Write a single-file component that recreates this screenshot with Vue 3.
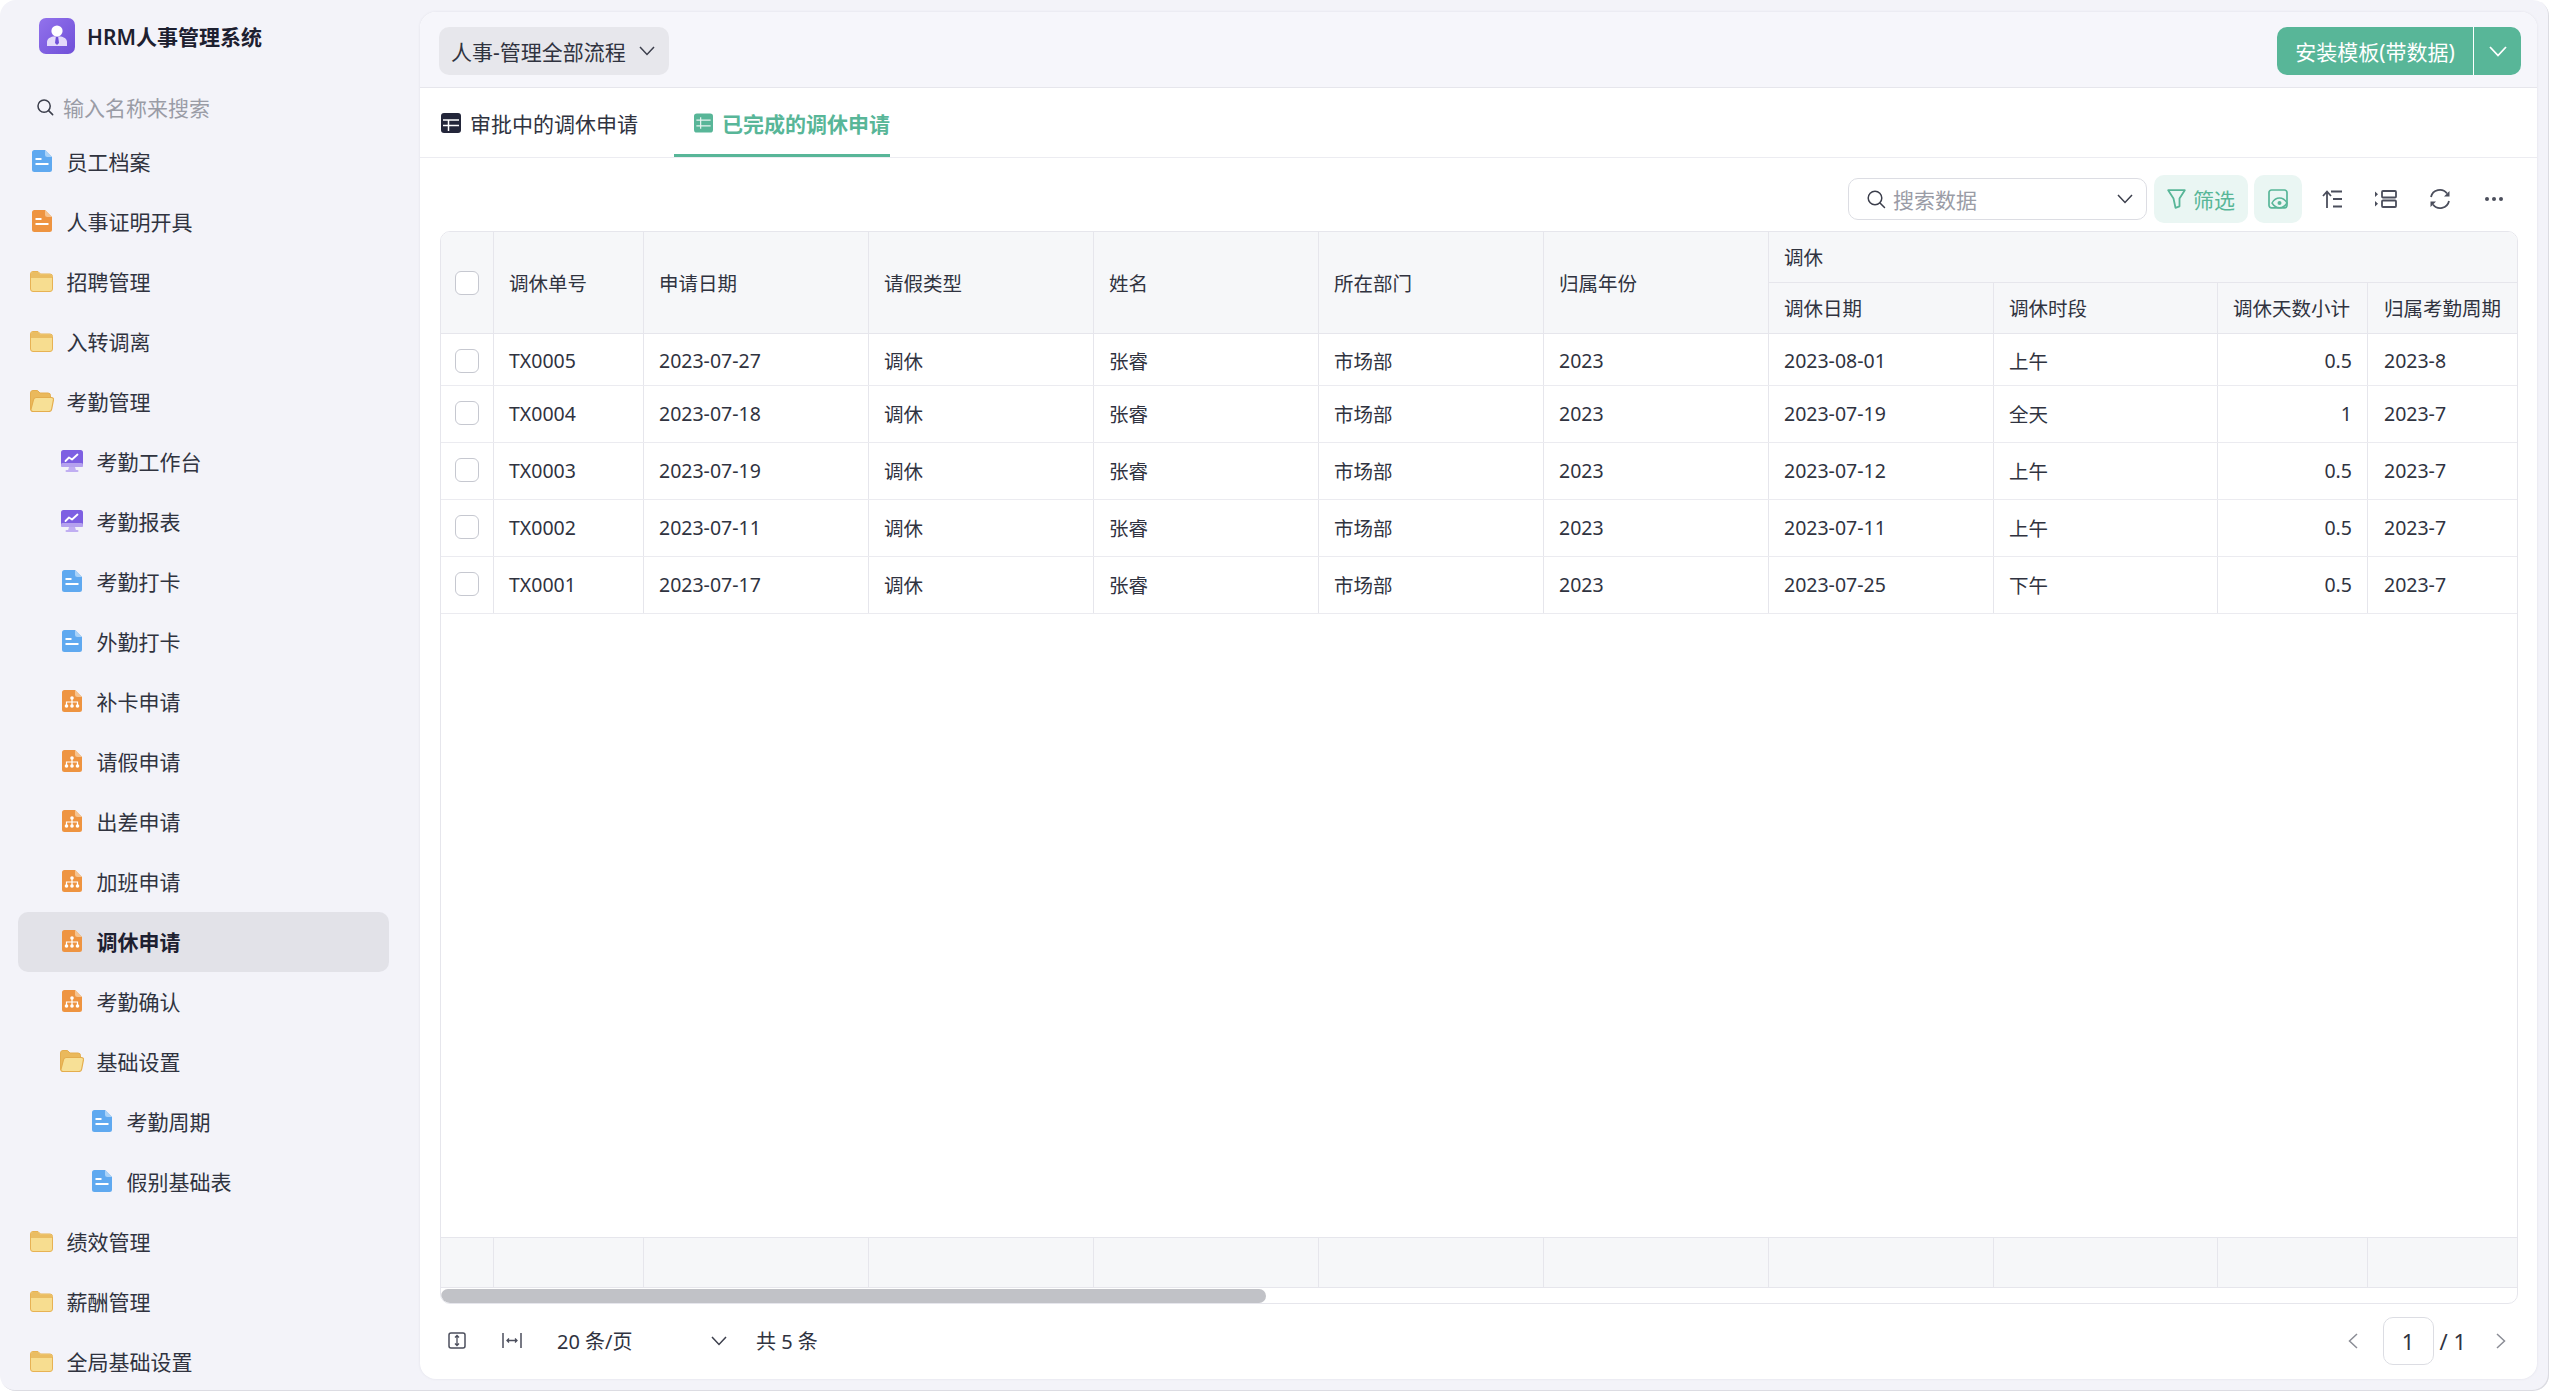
<script setup>
const menu = [
  { name: '员工档案', icon: 'doc-blue', level: 0 },
  { name: '人事证明开具', icon: 'doc-orange', level: 0 },
  { name: '招聘管理', icon: 'folder', level: 0 },
  { name: '入转调离', icon: 'folder', level: 0 },
  { name: '考勤管理', icon: 'open', level: 0 },
  { name: '考勤工作台', icon: 'chart', level: 1 },
  { name: '考勤报表', icon: 'chart', level: 1 },
  { name: '考勤打卡', icon: 'doc-blue', level: 1 },
  { name: '外勤打卡', icon: 'doc-blue', level: 1 },
  { name: '补卡申请', icon: 'flow', level: 1 },
  { name: '请假申请', icon: 'flow', level: 1 },
  { name: '出差申请', icon: 'flow', level: 1 },
  { name: '加班申请', icon: 'flow', level: 1 },
  { name: '调休申请', icon: 'flow', level: 1, active: true },
  { name: '考勤确认', icon: 'flow', level: 1 },
  { name: '基础设置', icon: 'open', level: 1 },
  { name: '考勤周期', icon: 'doc-blue', level: 2 },
  { name: '假别基础表', icon: 'doc-blue', level: 2 },
  { name: '绩效管理', icon: 'folder', level: 0 },
  { name: '薪酬管理', icon: 'folder', level: 0 },
  { name: '全局基础设置', icon: 'folder', level: 0 },
]

const rows = [
  ['TX0005', '2023-07-27', '调休', '张睿', '市场部', '2023', '2023-08-01', '上午', '0.5', '2023-8'],
  ['TX0004', '2023-07-18', '调休', '张睿', '市场部', '2023', '2023-07-19', '全天', '1', '2023-7'],
  ['TX0003', '2023-07-19', '调休', '张睿', '市场部', '2023', '2023-07-12', '上午', '0.5', '2023-7'],
  ['TX0002', '2023-07-11', '调休', '张睿', '市场部', '2023', '2023-07-11', '上午', '0.5', '2023-7'],
  ['TX0001', '2023-07-17', '调休', '张睿', '市场部', '2023', '2023-07-25', '下午', '0.5', '2023-7'],
]

const mainHeads = ['调休单号', '申请日期', '请假类型', '姓名', '所在部门', '归属年份']
const subHeads = ['调休日期', '调休时段', '调休天数小计', '归属考勤周期']
</script>

<template>
  <div class="window">
    <aside class="sidebar">
      <div class="brand">
        <svg class="logo" viewBox="0 0 36 36">
          <defs>
            <linearGradient id="logoBg" x1="0" y1="0" x2="1" y2="1">
              <stop offset="0" stop-color="#9272ec" />
              <stop offset="1" stop-color="#6f4fd8" />
            </linearGradient>
          </defs>
          <rect width="36" height="36" rx="7" fill="url(#logoBg)" />
          <circle cx="18" cy="13" r="5.6" fill="#fff" />
          <path d="M8 28v-4c0-3 3-5 6-5.5h8c3 .5 6 2.5 6 5.5v4z" fill="#e3dafa" />
          <path d="M16.8 19h2.4l.8 6-2 2-2-2z" fill="#6f4fd8" />
        </svg>
        <span class="brand-name">HRM人事管理系统</span>
      </div>
      <div class="side-search">
        <svg viewBox="0 0 20 20" class="side-search-icon">
          <circle cx="9" cy="9" r="6.8" fill="none" stroke="#3c3f4c" stroke-width="1.7" />
          <path d="M14 14l4.5 4.5" stroke="#3c3f4c" stroke-width="1.7" stroke-linecap="round" />
        </svg>
        <span>输入名称来搜索</span>
      </div>
      <nav class="menu">
        <div
          v-for="item in menu"
          :key="item.name"
          class="menu-item"
          :class="[`level-${item.level}`, { active: item.active }]"
        >
          <span class="menu-icon">
            <svg v-if="item.icon === 'doc-blue' || item.icon === 'doc-orange'" width="20" height="22" viewBox="0 0 20 22">
              <path
                d="M2.5 0H13l7 7v12.500a2.500 2.500 0 0 1-2.500 2.500h-15A2.500 2.500 0 0 1 0 19.500v-17A2.500 2.500 0 0 1 2.500 0z"
                :fill="item.icon === 'doc-blue' ? '#5fa9f0' : '#ee9441'"
              />
              <path d="M13 0l7 7h-4.500A2.500 2.500 0 0 1 13 4.500z" :fill="item.icon === 'doc-blue' ? '#a9d2f8' : '#f6c38f'" />
              <path d="M3.500 9h6M3.500 14h13" stroke="#fff" stroke-width="1.800" />
            </svg>
            <svg v-else-if="item.icon === 'flow'" width="20" height="22" viewBox="0 0 20 22">
              <path
                d="M2.500 0H13l7 7v12.500a2.500 2.500 0 0 1-2.500 2.500h-15A2.500 2.500 0 0 1 0 19.500v-17A2.500 2.500 0 0 1 2.500 0z"
                fill="#ee9441"
              />
              <path d="M13 0l7 7h-4.500A2.500 2.500 0 0 1 13 4.500z" fill="#f6c38f" />
              <g fill="#fff">
                <circle cx="10" cy="8" r="1.800" />
                <circle cx="4.500" cy="16" r="1.800" />
                <circle cx="10" cy="16" r="1.800" />
                <circle cx="15.500" cy="16" r="1.800" />
              </g>
              <path d="M10 8v7M4.500 15v-3h11v3" fill="none" stroke="#fff" stroke-width="1.200" />
            </svg>
            <svg v-else-if="item.icon === 'chart'" class="chart-icon" width="22" height="22" viewBox="0 0 22 22">
              <path d="M8 17h6l1 3.500H7z" fill="#c0aef2" />
              <rect x="4.500" y="20" width="13" height="2" rx="1" fill="#c0aef2" />
              <rect width="22" height="17" rx="2.500" fill="#7d5fe2" />
              <rect y="13" width="22" height="4" rx="1.500" fill="#b5a1ef" />
              <path d="M4.500 11l3.500-3.500 3 2 5.500-5" fill="none" stroke="#fff" stroke-width="1.800" stroke-linecap="round" stroke-linejoin="round" />
            </svg>
            <svg v-else-if="item.icon === 'open'" class="folder-icon" width="24" height="22" viewBox="0 0 24 22">
              <path d="M.5 19V3A2.500 2.500 0 0 1 3 .500h4.500L10 3h8a2.500 2.500 0 0 1 2.500 2.500V8H6L3 20.500H2A1.500 1.500 0 0 1 .5 19z" fill="#eab95c" stroke="#e4ad4e" />
              <path d="M6.200 7.500H21.500c1.300 0 2.200 1 2 2.200l-1.800 9.300c-.2 1.400-1.300 2.500-2.700 2.500H3c-1.300 0-2.300-1-2-2.300L3.500 9.700c.3-1.300 1.400-2.200 2.700-2.200z" fill="#f7e096" stroke="#e4ad4e" stroke-width="1.200" />
            </svg>
            <svg v-else class="folder-icon" width="23" height="21" viewBox="0 0 23 21">
              <path d="M.5 18V3A2.500 2.500 0 0 1 3 .500h5L10.500 3H20a2.500 2.500 0 0 1 2.500 2.500V18a2.500 2.500 0 0 1-2.500 2.500H3A2.500 2.500 0 0 1 .5 18z" fill="#f7dd90" stroke="#e7b254" />
              <path d="M1 3a2 2 0 0 1 2-2h5l2.500 2.500H20A2 2 0 0 1 22 6v1H1z" fill="#eabd63" />
            </svg>
          </span>
          <span class="menu-name">{{ item.name }}</span>
        </div>
      </nav>
    </aside>

    <main class="panel">
      <header class="panel-head">
        <div class="flow-select">
          <span>人事-管理全部流程</span>
          <svg class="chevron" width="16" height="10" viewBox="0 0 16 10">
            <path d="M1 1l7 7.500L15 1" fill="none" stroke="#3c3f4c" stroke-width="1.500" />
          </svg>
        </div>
        <div class="install">
          <span class="install-main">安装模板(带数据)</span>
          <span class="install-arrow">
            <svg width="18" height="11" viewBox="0 0 18 11">
              <path d="M1 1l8 8.500L17 1" fill="none" stroke="#fff" stroke-width="1.800" />
            </svg>
          </span>
        </div>
      </header>

      <div class="tabs">
        <div class="tab">
          <svg width="20" height="20" viewBox="0 0 20 20">
            <rect width="20" height="20" rx="3" fill="#23263a" />
            <path d="M2 7h16M2 12.500h16M7.500 7v11" stroke="#fff" stroke-width="1.500" />
          </svg>
          <span>审批中的调休申请</span>
        </div>
        <div class="tab current">
          <svg width="20" height="20" viewBox="0 0 20 20">
            <rect width="20" height="20" rx="3" fill="#58b698" />
            <path d="M2.500 7h15M2.500 13h15M7 4v12" stroke="#fff" stroke-width="1.300" opacity=".85" />
          </svg>
          <span>已完成的调休申请</span>
        </div>
      </div>

      <div class="toolbar">
        <div class="data-search">
          <svg width="20" height="20" viewBox="0 0 20 20">
            <circle cx="9" cy="9" r="6.800" fill="none" stroke="#3c3f4c" stroke-width="1.500" />
            <path d="M14 14l4.500 4.500" stroke="#3c3f4c" stroke-width="1.500" stroke-linecap="round" />
          </svg>
          <span class="data-search-text">搜索数据</span>
          <svg width="16" height="10" viewBox="0 0 16 10">
            <path d="M1 1l7 7.500L15 1" fill="none" stroke="#3c3f4c" stroke-width="1.500" />
          </svg>
        </div>
        <div class="soft-btn filter">
          <svg width="19" height="20" viewBox="0 0 19 20">
            <path d="M1.200 1.200h16.600L12.500 9.500v7.800L8.500 18.800 6.500 9.500z" fill="none" stroke="#58b698" stroke-width="1.800" stroke-linejoin="round" />
          </svg>
          <span>筛选</span>
        </div>
        <div class="soft-btn eye">
          <svg width="20" height="20" viewBox="0 0 20 20">
            <path d="M5 18.800H3.500a2.500 2.500 0 0 1-2.500-2.500V3.500A2.500 2.500 0 0 1 3.500 1h13A2.500 2.500 0 0 1 19 3.500v12.800a2.500 2.500 0 0 1-2.500 2.500H5" fill="none" stroke="#58b698" stroke-width="1.700" />
            <path d="M4 14c2-3.500 4.500-5 7.500-5s5.500 1.500 7.500 5c-2 3.200-4.500 4.800-7.500 4.800S6 17.200 4 14z" fill="#eaf6f3" stroke="#58b698" stroke-width="1.500" />
            <circle cx="11.500" cy="14" r="2" fill="#58b698" />
          </svg>
        </div>
        <div class="tool-icons">
          <svg width="20" height="18" viewBox="0 0 20 18">
            <path d="M5 18V2M1 6l4-4.500L9 6" fill="none" stroke="#4b4e5c" stroke-width="1.800" />
            <path d="M9 1.500h11M11 9h9M11 16.500h9" stroke="#4b4e5c" stroke-width="1.800" />
          </svg>
          <svg width="22" height="18" viewBox="0 0 22 18">
            <rect x="7" y="1" width="14" height="6.500" rx="1" fill="none" stroke="#4b4e5c" stroke-width="1.800" />
            <rect x="7" y="10.500" width="14" height="6.500" rx="1" fill="none" stroke="#4b4e5c" stroke-width="1.800" />
            <path d="M0 1.500l3 2.700-3 2.700zM0 11l3 2.700L0 16.400z" fill="#4b4e5c" />
          </svg>
          <svg width="22" height="22" viewBox="0 0 22 22">
            <path d="M2 9a9 9 0 0 1 16-3.500M20 13a9 9 0 0 1-16 3.500" fill="none" stroke="#4b4e5c" stroke-width="1.800" />
            <path d="M20.500 3v5.500H15zM1.500 19v-5.500H7z" fill="#4b4e5c" />
          </svg>
          <svg width="20" height="6" viewBox="0 0 20 6">
            <circle cx="3" cy="3" r="2" fill="#4b4e5c" />
            <circle cx="10" cy="3" r="2" fill="#4b4e5c" />
            <circle cx="17" cy="3" r="2" fill="#4b4e5c" />
          </svg>
        </div>
      </div>

      <section class="grid-table">
        <div class="table-head">
          <div class="th span-rows check-cell"><span class="checkbox"></span></div>
          <div v-for="h in mainHeads" :key="h" class="th span-rows">{{ h }}</div>
          <div class="th group">调休</div>
          <div v-for="(h, i) in subHeads" :key="h" class="th sub" :class="{ last: i === 3 }">{{ h }}</div>
        </div>

        <div class="table-body">
          <div v-for="(row, r) in rows" :key="row[0]" class="tr" :class="{ first: r === 0 }">
            <div class="td check-cell"><span class="checkbox"></span></div>
            <div v-for="(val, c) in row" :key="c" class="td" :class="{ num: c === 8, last: c === 9 }">{{ val }}</div>
          </div>
        </div>

        <div class="table-foot">
          <div v-for="n in 11" :key="n" class="tf" :class="{ last: n === 11 }"></div>
        </div>
        <div class="scroll-track"><div class="scroll-thumb"></div></div>
      </section>

      <footer class="pager">
        <div class="pager-left">
          <svg width="18" height="17" viewBox="0 0 18 17">
            <rect x="1" y="1" width="16" height="15" rx="2" fill="none" stroke="#4b4e5c" stroke-width="1.500" />
            <path d="M9 3.500v10M7 5.500l2-2 2 2M7 11.500l2 2 2-2" fill="none" stroke="#4b4e5c" stroke-width="1.300" />
          </svg>
          <svg width="20" height="17" viewBox="0 0 20 17">
            <path d="M1 1v15M19 1v15" stroke="#4b4e5c" stroke-width="1.500" />
            <path d="M5 8.500h10M7 6.500l-2 2 2 2M13 6.500l2 2-2 2" fill="none" stroke="#4b4e5c" stroke-width="1.300" />
          </svg>
          <span class="page-size">20 条/页</span>
          <svg class="page-size-arrow" width="16" height="10" viewBox="0 0 16 10">
            <path d="M1 1l7 7.500L15 1" fill="none" stroke="#3c3f4c" stroke-width="1.500" />
          </svg>
          <span class="total">共 5 条</span>
        </div>
        <div class="pager-right">
          <svg width="10" height="16" viewBox="0 0 10 16">
            <path d="M9 1L1.500 8 9 15" fill="none" stroke="#8b8d96" stroke-width="1.500" />
          </svg>
          <span class="page-input">1</span>
          <span class="page-count">/ 1</span>
          <svg width="10" height="16" viewBox="0 0 10 16">
            <path d="M1 1l7.500 7L1 15" fill="none" stroke="#8b8d96" stroke-width="1.500" />
          </svg>
        </div>
      </footer>
    </main>
  </div>
</template>

<style>
html,
body {
  margin: 0;
  background: #fff;
}
</style>

<style scoped>
.window {
  box-sizing: border-box;
  width: 2549px;
  height: 1391px;
  display: flex;
  overflow: hidden;
  border-radius: 16px;
  background: #f3f3f9;
  box-shadow: inset -1px -1px 0 #dcdce2;
  font-family: "Noto Sans", "Noto Sans CJK SC", sans-serif;
  color: #23263a;
}

.sidebar {
  width: 420px;
  flex: none;
  box-sizing: border-box;
  padding: 18px 31px 0 18px;
}

.brand {
  display: flex;
  align-items: center;
  gap: 12px;
  height: 36px;
  padding-left: 21px;
}

.logo {
  width: 36px;
  height: 36px;
}

.brand-name {
  font-size: 21px;
  font-weight: 600;
  color: #1d2030;
}

.side-search {
  display: flex;
  align-items: center;
  gap: 9px;
  height: 48px;
  box-sizing: border-box;
  margin-top: 30px;
  padding: 0 0 3px 18px;
  font-size: 21px;
  color: #9a9ca6;
}

.side-search-icon {
  width: 18px;
  height: 18px;
}

.menu {
  display: flex;
  flex-direction: column;
}

.menu-item {
  display: flex;
  align-items: center;
  height: 60px;
  flex: none;
  box-sizing: border-box;
  padding-bottom: 2px;
  border-radius: 10px;
  font-size: 21px;
  color: #30333f;
}

.menu-item.level-0 {
  padding-left: 14px;
}

.menu-item.level-1 {
  padding-left: 44px;
}

.menu-item.level-2 {
  padding-left: 74px;
}

.menu-item.active {
  background: #e2e2e8;
  font-weight: 700;
  color: #1d2030;
}

.menu-icon {
  display: flex;
  align-items: center;
  width: 34.500px;
  flex: none;
}

.folder-icon {
  margin-left: -2px;
}

.chart-icon {
  margin-left: -1px;
}

.panel {
  flex: none;
  width: 2117px;
  height: 1367px;
  margin-top: 12px;
  display: flex;
  flex-direction: column;
  background: #fff;
  border-radius: 16px;
  box-shadow: 0 0 3px rgba(30, 30, 60, 0.08);
  overflow: hidden;
}

.panel-head {
  height: 76px;
  box-sizing: border-box;
  flex: none;
  display: flex;
  align-items: center;
  justify-content: space-between;
  padding: 3px 16px 0 19px;
  background: #f6f6fb;
  border-bottom: 1px solid #e6e6ec;
}

.flow-select {
  height: 48px;
  width: 230px;
  box-sizing: border-box;
  padding: 0 14px 0 12px;
  display: flex;
  align-items: center;
  justify-content: space-between;
  background: #e7e7ec;
  border-radius: 10px;
  font-size: 21px;
  color: #30333f;
}

.install {
  height: 48px;
  width: 244px;
  display: flex;
  background: #58b698;
  border-radius: 10px;
  color: #fff;
  font-size: 21px;
}

.install-main {
  width: 196px;
  display: flex;
  align-items: center;
  justify-content: center;
  border-right: 1px solid #fff;
}

.install-arrow {
  flex: 1;
  display: flex;
  align-items: center;
  justify-content: center;
}

.tabs {
  height: 70px;
  box-sizing: border-box;
  flex: none;
  display: flex;
  gap: 36px;
  padding-left: 21px;
  border-bottom: 1px solid #ececf1;
}

.tab {
  display: flex;
  align-items: center;
  gap: 9px;
  font-size: 21px;
  color: #30333f;
  white-space: nowrap;
  box-sizing: border-box;
}

.tab.current {
  width: 216px;
  flex: none;
  padding-left: 20px;
  color: #58b698;
  font-weight: 700;
  box-shadow: inset 0 -3px 0 #58b698;
}

.toolbar {
  height: 73px;
  box-sizing: border-box;
  flex: none;
  display: flex;
  align-items: center;
  justify-content: flex-end;
  padding: 9px 33px 0 0;
  gap: 6px;
}

.data-search {
  width: 299px;
  height: 42px;
  box-sizing: border-box;
  display: flex;
  align-items: center;
  padding: 0 13px 0 17px;
  margin-right: 1px;
  border: 1px solid #dcdde3;
  border-radius: 10px;
  font-size: 21px;
  color: #9a9ca6;
}

.data-search-text {
  flex: 1;
  margin-left: 7px;
}

.soft-btn {
  height: 48px;
  box-sizing: border-box;
  display: flex;
  align-items: center;
  justify-content: center;
  background: #eaf6f3;
  border-radius: 10px;
  color: #58b698;
  font-size: 21px;
}

.filter {
  width: 94px;
  gap: 7px;
}

.eye {
  width: 48px;
}

.tool-icons {
  display: flex;
  align-items: center;
  width: 196px;
  box-sizing: border-box;
  justify-content: space-between;
  padding-left: 14px;
}

.grid-table {
  flex: 1;
  min-height: 0;
  margin: 0 19px 0 20px;
  display: flex;
  flex-direction: column;
  border: 1px solid #e6e6ec;
  border-radius: 10px;
  overflow: hidden;
  font-size: 19.5px;
  color: #30333f;
  --cols: 53px 150px 225px 225px 225px 225px 225px 225px 224px 150px 1fr;
}

.table-head {
  display: grid;
  grid-template-columns: var(--cols);
  grid-template-rows: 51px 50px;
  background: #f6f7f9;
  border-bottom: 1px solid #e6e6ec;
  flex: none;
}

.th,
.td {
  display: flex;
  align-items: center;
  box-sizing: border-box;
  padding: 0 15px;
  border-right: 1px solid #e6e6ec;
  white-space: nowrap;
}

.span-rows {
  grid-row: 1 / span 2;
}

.group {
  grid-row: 1;
  grid-column: 8 / span 4;
  border-right: 0;
  border-bottom: 1px solid #e6e6ec;
  padding-bottom: 2px;
}

.sub {
  grid-row: 2;
  padding-bottom: 2px;
}

.sub.last {
  border-right: 0;
  padding: 0 0 2px 16px;
}

.check-cell {
  padding: 0;
  justify-content: center;
}

.checkbox {
  display: block;
  width: 24px;
  height: 24px;
  box-sizing: border-box;
  border: 1px solid #c6c8d0;
  border-radius: 6px;
  background: #fff;
}

.table-body {
  flex: 1;
}

.tr {
  display: grid;
  grid-template-columns: var(--cols);
  height: 57px;
  border-bottom: 1px solid #ebebf0;
  box-sizing: border-box;
}

.tr .td {
  padding-bottom: 2px;
}

.tr.first {
  height: 52px;
}

.tr.first .td {
  padding-top: 2px;
  padding-bottom: 0;
}

.td.num {
  justify-content: flex-end;
}

.td.last {
  border-right: 0;
  padding-left: 16px;
}

.table-foot {
  flex: none;
  display: grid;
  grid-template-columns: var(--cols);
  height: 51px;
  box-sizing: border-box;
  background: #f6f7f9;
  border-top: 1px solid #e6e6ec;
  border-bottom: 1px solid #e6e6ec;
}

.tf {
  border-right: 1px solid #e6e6ec;
}

.tf.last {
  border-right: 0;
}

.scroll-track {
  flex: none;
  height: 15px;
  padding-top: 1px;
  box-sizing: border-box;
}

.scroll-thumb {
  width: 825px;
  height: 14px;
  background: #c1c2c7;
  border-radius: 7px;
}

.pager {
  height: 75px;
  box-sizing: border-box;
  flex: none;
  display: flex;
  align-items: center;
  justify-content: space-between;
  padding: 0 31px 2px 28px;
  font-size: 20px;
  color: #30333f;
}

.pager-left {
  display: flex;
  align-items: center;
}

.pager-left svg:nth-child(2) {
  margin-left: 36px;
}

.page-size {
  margin-left: 35px;
  width: 154px;
}

.total {
  margin-left: 29px;
}

.pager-right {
  display: flex;
  align-items: center;
  font-size: 22px;
}

.page-input {
  width: 51px;
  height: 48px;
  margin-left: 25px;
  box-sizing: border-box;
  display: flex;
  align-items: center;
  justify-content: center;
  border: 1px solid #dcdde3;
  border-radius: 10px;
}

.page-count {
  margin: 0 30px 0 6px;
}
</style>
